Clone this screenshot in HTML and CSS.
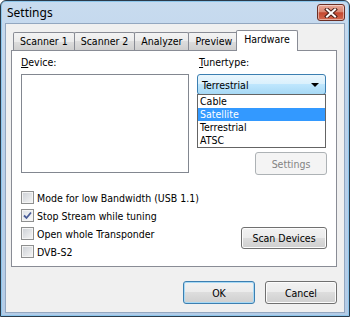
FILE: index.html
```html
<!DOCTYPE html>
<html lang="en">
<head>
  <meta charset="UTF-8" />
  <title>Settings</title>
  <link rel="stylesheet" href="styles.css">
</head>
<body>
  <div class="window">
    <div class="titlebar">
      <span class="title">Settings</span>
      <button class="close-btn" aria-label="Close">
        <svg width="14" height="10" viewBox="0 0 14 10">
          <path d="M3 1.5 L11 8.5 M11 1.5 L3 8.5" stroke="#4b1f18" stroke-width="4" stroke-linecap="square" />
          <path d="M3 1.5 L11 8.5 M11 1.5 L3 8.5" stroke="#fff" stroke-width="2" stroke-linecap="square" />
        </svg>
      </button>
    </div>

    <div class="client">
      <div class="tabs">
        <div class="tab">Scanner 1</div>
        <div class="tab">Scanner 2</div>
        <div class="tab">Analyzer</div>
        <div class="tab">Preview</div>
        <div class="tab active">Hardware</div>
      </div>

      <div class="panel">
        <div class="top-row">
          <div class="device-col">
            <div class="label"><u>D</u>evice:</div>
            <div class="listbox"></div>
          </div>
          <div class="tuner-col">
            <div class="label"><u>T</u>unertype:</div>
            <div class="combo">
              <span class="combo-text">Terrestrial</span>
              <span class="arrow"></span>
              <ul class="dropdown">
                <li>Cable</li>
                <li class="selected">Satellite</li>
                <li>Terrestrial</li>
                <li>ATSC</li>
              </ul>
            </div>
            <button class="btn btn-settings" disabled>Settings</button>
          </div>
        </div>

        <div class="bottom-row">
          <div class="checks">
            <label class="check"><span class="box"></span>Mode for low Bandwidth (USB 1.1)</label>
            <label class="check"><span class="box checked">
              <svg width="9" height="9" viewBox="0 0 9 9"><path d="M1 4.5 L3.5 7 L8 1.5" fill="none" stroke="#4a5d98" stroke-width="1.8" /></svg>
            </span>Stop Stream while tuning</label>
            <label class="check"><span class="box"></span>Open whole Transponder</label>
            <label class="check"><span class="box"></span>DVB-S2</label>
          </div>
          <button class="btn btn-scan">Scan Devices</button>
        </div>
      </div>

      <div class="footer">
        <button class="btn btn-default">OK</button>
        <button class="btn">Cancel</button>
      </div>
    </div>
  </div>
</body>
</html>
```

FILE: styles.css
```css
body {
  margin: 0;
  font-family: "DejaVu Sans Condensed", "DejaVu Sans", sans-serif;
  font-size: 10.5px;
  color: #000;
}

.window {
  width: 350px;
  height: 317px;
  box-sizing: border-box;
  border: 1px solid #2b3a4a;
  border-radius: 6px 6px 0 0;
  padding: 0 4px 3px 4px;
  background: linear-gradient(#c8dbef, #bad1ea 40%, #b4cce7);
  box-shadow: inset 0 0 0 1px #8cc6ec;
  display: flex;
  flex-direction: column;
}

.titlebar {
  height: 22px;
  display: flex;
  justify-content: space-between;
  align-items: flex-start;
  flex-shrink: 0;
}

.title {
  font-family: "Noto Sans", sans-serif;
  font-size: 12px;
  padding: 3px 0 0 2px;
}

.close-btn {
  margin-top: 3px;
  width: 28px;
  height: 17px;
  padding: 0;
  border: 1px solid #6b2e24;
  border-radius: 3px;
  background: linear-gradient(#eaa898, #d98772 45%, #c4472f 52%, #d36a50);
  box-shadow: inset 0 0 0 1px rgba(255,255,255,0.45);
  display: flex;
  align-items: center;
  justify-content: center;
}

.client {
  flex: 1;
  background-color: #f0f0f0;
  border: 1px solid #93a7c0;
  display: flex;
  flex-direction: column;
}

.tabs {
  height: 26px;
  display: flex;
  align-items: flex-end;
  margin: 0 7px 0 5px;
  padding-left: 2px;
  flex-shrink: 0;
}

.tab {
  height: 17px;
  line-height: 16px;
  padding: 0 6px;
  border: 1px solid #898c95;
  border-bottom: none;
  border-radius: 2px 2px 0 0;
  background: linear-gradient(#f3f3f3, #ebebeb 50%, #dddddd 50%, #cfcfcf);
  margin-left: -1px;
}

.tab:first-child {
  margin-left: 0;
}

.tab.active {
  height: 20px;
  line-height: 17px;
  padding: 0 7px;
  margin: 0 -2px -1px -3px;
  background: #fff;
  position: relative;
  z-index: 1;
}

.panel {
  height: 217px;
  box-sizing: border-box;
  margin: 0 7px 0 5px;
  padding: 5px 9px 0 9px;
  border: 1px solid #898c95;
  background-color: #fff;
}

.top-row {
  display: flex;
}

.label {
  height: 13px;
  line-height: 13px;
  margin-bottom: 5px;
}

.device-col {
  width: 168px;
}

.listbox {
  height: 99px;
  box-sizing: border-box;
  border: 1px solid #828790;
  background-color: #fff;
}

.tuner-col {
  width: 130px;
  margin-left: 8px;
  display: flex;
  flex-direction: column;
  align-items: flex-end;
}

.tuner-col .label {
  align-self: flex-start;
  padding-left: 2px;
}

.combo {
  position: relative;
  width: 129px;
  height: 21px;
  box-sizing: border-box;
  align-self: flex-start;
  border: 1px solid #3c7fb1;
  border-radius: 3px;
  background: linear-gradient(#eaf6fd, #d9f0fc 50%, #bee6fd 50%, #a7d9f5);
  display: flex;
  align-items: center;
  padding-left: 4px;
}

.combo-text {
  flex: 1;
}

.arrow {
  width: 0;
  height: 0;
  margin-right: 6px;
  border-left: 4px solid transparent;
  border-right: 4px solid transparent;
  border-top: 4px solid #000;
}

.dropdown {
  position: absolute;
  top: 19px;
  left: -1px;
  width: 129px;
  box-sizing: border-box;
  margin: 0;
  padding: 0;
  list-style: none;
  border: 1px solid #646464;
  background-color: #fff;
  z-index: 2;
}

.dropdown li {
  height: 13px;
  line-height: 13px;
  padding-left: 2px;
}

.dropdown li.selected {
  background-color: #3399ff;
  color: #fff;
}

.btn {
  font-family: inherit;
  font-size: 10.5px;
  color: #000;
  width: 72px;
  height: 23px;
  padding: 0;
  border: 1px solid #707070;
  border-radius: 3px;
  background: linear-gradient(#f2f2f2, #ebebeb 50%, #dddddd 50%, #cfcfcf);
  box-shadow: inset 0 0 0 1px #fcfcfc;
}

.btn-settings {
  margin-top: 57px;
  color: #838383;
  border-color: #adb2b5;
  background: #f4f4f4;
  box-shadow: none;
}

.bottom-row {
  display: flex;
  justify-content: space-between;
  align-items: flex-start;
  margin-top: 16px;
}

.checks {
  display: flex;
  flex-direction: column;
  gap: 5px;
}

.check {
  display: flex;
  align-items: center;
  height: 13px;
  gap: 3px;
}

.box {
  width: 13px;
  height: 13px;
  box-sizing: border-box;
  border: 1px solid #8e8f8f;
  background: linear-gradient(135deg, #cbcfd5, #f6f6f6);
  box-shadow: inset 0 0 0 1px #f4f4f4;
  display: flex;
  align-items: center;
  justify-content: center;
}

.box.checked {
  background: linear-gradient(135deg, #dde1e6, #fbfbfb);
}

.btn-scan {
  width: 86px;
  height: 22px;
  margin-top: 36px;
}

.footer {
  display: flex;
  justify-content: flex-end;
  gap: 10px;
  padding: 14px 7px 0 0;
}

.btn-default {
  border-color: #3c7fb1;
  box-shadow: inset 0 0 0 1px #a7d9f5;
}
```
